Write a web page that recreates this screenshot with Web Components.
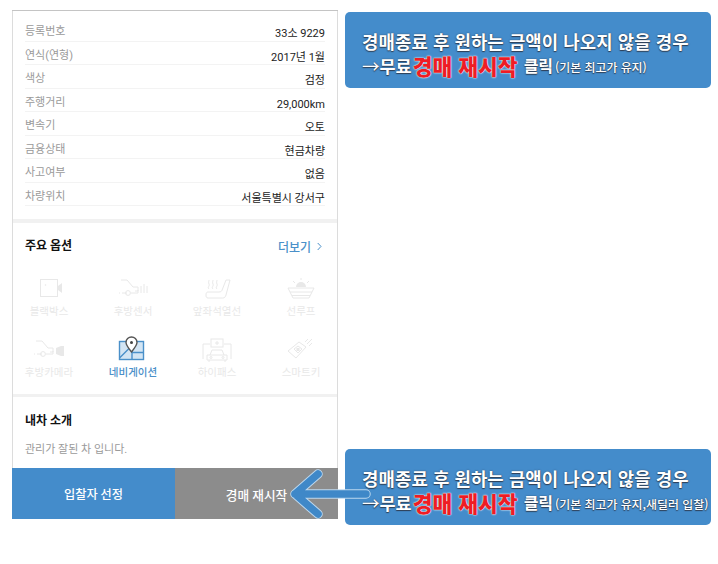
<!DOCTYPE html>
<html lang="ko">
<head>
<meta charset="utf-8">
<title>경매 재시작</title>
<style>
  html, body { margin: 0; background: #fff; }
  body { font-family: Roboto, "Noto Sans CJK KR", sans-serif; }
</style>
</head>
<body>
<auction-page>
  <car-card>
    <spec-list>
      <spec-row label="등록번호" value="33소 9229"></spec-row>
      <spec-row label="연식(연형)" value="2017년 1월"></spec-row>
      <spec-row label="색상" value="검정"></spec-row>
      <spec-row label="주행거리" value="29,000km"></spec-row>
      <spec-row label="변속기" value="오토"></spec-row>
      <spec-row label="금융상태" value="현금차량"></spec-row>
      <spec-row label="사고여부" value="없음"></spec-row>
      <spec-row label="차량위치" value="서울특별시 강서구"></spec-row>
    </spec-list>
    <option-panel>
      <option-item label="블랙박스" icon="camera"></option-item>
      <option-item label="후방센서" icon="sensor"></option-item>
      <option-item label="앞좌석열선" icon="seat"></option-item>
      <option-item label="선루프" icon="sunroof"></option-item>
      <option-item label="후방카메라" icon="rearcam"></option-item>
      <option-item label="네비게이션" icon="navi" active></option-item>
      <option-item label="하이패스" icon="hipass"></option-item>
      <option-item label="스마트키" icon="smartkey"></option-item>
    </option-panel>
    <intro-panel heading="내차 소개">관리가 잘된 차 입니다.</intro-panel>
    <action-bar></action-bar>
  </car-card>
  <note-column>
    <callout-note detail="(기본 최고가 유지)"></callout-note>
    <callout-note detail="(기본 최고가 유지,새딜러 입찰)"></callout-note>
  </note-column>
  <pointer-arrow></pointer-arrow>
</auction-page>

<script>
class AuctionPage extends HTMLElement {
  constructor() {
    super();
    this.attachShadow({ mode: 'open' });
    this.shadowRoot.innerHTML = `
      <style>
        :host {
          display: flex;
          position: relative;
          width: 718px;
          height: 564px;
          box-sizing: border-box;
          padding: 10px 7px 0 12px;
          gap: 7px;
          align-items: flex-start;
          overflow: hidden;
        }
      </style>
      <slot></slot>
    `;
  }
}

class CarCard extends HTMLElement {
  constructor() {
    super();
    this.attachShadow({ mode: 'open' });
    this.shadowRoot.innerHTML = `
      <style>
        :host {
          display: flex;
          flex-direction: column;
          width: 326px;
          height: 509px;
          box-sizing: border-box;
          border-top: 1px solid #c4c4c4;
          box-shadow: inset 1px 0 0 #dcdcdc, inset -1px 0 0 #dcdcdc;
        }
      </style>
      <slot></slot>
    `;
  }
}

class SpecList extends HTMLElement {
  constructor() {
    super();
    this.attachShadow({ mode: 'open' });
    this.shadowRoot.innerHTML = `
      <style>
        :host {
          display: block;
          height: 212px;
          box-sizing: border-box;
          padding: 7px 12px 0 12px;
          border-bottom: 4px solid #f1f1f1;
          margin: 0 1px;
        }
      </style>
      <slot></slot>
    `;
  }
}

class SpecRow extends HTMLElement {
  constructor() {
    super();
    this.attachShadow({ mode: 'open' });
    this.shadowRoot.innerHTML = `
      <style>
        :host {
          display: flex;
          justify-content: space-between;
          height: 23.5px;
          box-sizing: border-box;
          border-bottom: 1px solid #f3f3f3;
          font-size: 11px;
          line-height: 16px;
        }
        .label { color: #9a9a9a; padding-top: 6px; }
        .value { color: #222; padding-top: 8px; height: 15px; }
      </style>
      <span class="label">${this.getAttribute('label')}</span>
      <span class="value">${this.getAttribute('value')}</span>
    `;
  }
}

class OptionPanel extends HTMLElement {
  constructor() {
    super();
    this.attachShadow({ mode: 'open' });
    this.shadowRoot.innerHTML = `
      <style>
        :host {
          display: block;
          height: 174px;
          box-sizing: border-box;
          margin: 0 1px;
          padding: 14px 0 0 0;
          border-bottom: 3px solid #f1f1f1;
        }
        .head {
          display: flex;
          justify-content: space-between;
          align-items: center;
          height: 18px;
          padding: 0 15px 0 12px;
        }
        h2 { margin: 0; font-size: 12px; font-weight: 700; color: #111; line-height: 18px; }
        .more { display: flex; align-items: center; gap: 6px; font-size: 12px; font-weight: 500; color: #4a90c9; }
        .grid {
          display: grid;
          grid-template-columns: repeat(4, 70px);
          grid-auto-rows: 41px;
          column-gap: 14px;
          row-gap: 20px;
          margin-top: 23px;
          padding-left: 1px;
        }
      </style>
      <div class="head">
        <h2>주요 옵션</h2>
        <span class="more">더보기
          <svg width="5" height="9" viewBox="0 0 5 9" fill="none" stroke="#4a90c9" stroke-width="1"><path d="M.7 1l3.3 3.400L.7 8"/></svg>
        </span>
      </div>
      <div class="grid"><slot></slot></div>
    `;
  }
}

const OPTION_ICONS = {
  camera: `<rect x="13.500" y="1.500" width="17" height="17"/><circle cx="18.500" cy="7" r=".8" fill="currentColor" stroke="none"/><path d="M31 8l4-3v10l-4-3z" fill="currentColor" stroke="none"/>`,
  sensor: `<g transform="translate(2 0)"><path d="M8 2h6l6 7h5v4h-3M14 15H9M6 15h1"/><circle cx="15" cy="15" r="2.400"/><path d="M18 15h7v-3M28 8v7M31 6v9M34 8v7"/></g>`,
  seat: `<g transform="translate(-2 0)"><path d="M15 14h11c2 0 3-1 3.500-3L33 2h4l-4 15c-.5 2-1.500 3-3.500 3H15c-1.500 0-2-1-2-3s.5-3 2-3z"/><path d="M16 11c-2-2 1-3 0-5s0-3 0-4M20 11c-2-2 1-3 0-5s0-3 0-4M24 11c-2-2 1-3 0-5s0-3 0-4"/></g>`,
  sunroof: `<path d="M9 10h26l-5 10H14zM11 14h22M13 17.500h18"/><path d="M17 9a5 5 0 0 1 10 0z" fill="currentColor" stroke="none"/><path d="M22 0v2M14 3l2 2M30 3l-2 2"/>`,
  rearcam: `<g transform="translate(3 0)"><path d="M6 2h6l6 7h5v4h-3M12 15H7M4 15h1"/><circle cx="13" cy="15" r="2.400"/><path d="M16 15h7v-3"/><path d="M26 9l5-2h3v10h-3l-5-2z" fill="currentColor" stroke="none"/></g>`,
  navi: `<g transform="translate(-1 -2)"><rect x="9.500" y="4.500" width="24" height="18" fill="#d3e5f4"/><path d="M9.500 21l11-11M22 15.500h11.500M22 4.500v18"/><path d="M21.500 16c-4-5-5.500-7-5.500-9.500a5.500 5.500 0 0 1 11 0c0 2.500-1.500 4.500-5.500 9.500z" transform="translate(0 -1)" fill="#fff" stroke="#555"/><circle cx="21.500" cy="5.500" r="1.500" fill="#444" stroke="none"/></g>`,
  hipass: `<path d="M8 20V5h7M36 20V5h-7"/><rect x="16" y="0" width="12" height="8"/><path d="M22 2v4M20 4h4"/><path d="M15 16l2-5h10l2 5M12 16h20v5H12zM14 21v2M30 21v2"/><circle cx="16" cy="18.500" r="1"/><circle cx="28" cy="18.500" r="1"/>`,
  smartkey: `<g transform="translate(-1 -2)"><path d="M10 14l11-9 7 5-10 11z"/><path d="M16 12l4-3 4 3-4 4z"/><rect x="18.500" y="11" width="3" height="3" fill="currentColor" stroke="none"/><path d="M27 5l3-3M29 7l5-5M31 9l3-3"/></g>`
};

class OptionItem extends HTMLElement {
  constructor() {
    super();
    this.attachShadow({ mode: 'open' });
    const active = this.hasAttribute('active');
    this.shadowRoot.innerHTML = `
      <style>
        :host {
          display: flex;
          flex-direction: column;
          align-items: center;
          font-size: 10.500px;
          line-height: 14px;
          color: ${active ? '#4a90c9' : '#e8e8e8'};
          font-weight: ${active ? 500 : 400};
        }
        svg { display: block; width: 44px; height: 24px; margin-bottom: 3px; overflow: visible; }
      </style>
      <svg viewBox="0 0 44 24" fill="none" stroke="currentColor" stroke-width="${active ? 1.4 : 1}">
        ${OPTION_ICONS[this.getAttribute('icon')]}
      </svg>
      <span>${this.getAttribute('label')}</span>
    `;
  }
}

class IntroPanel extends HTMLElement {
  constructor() {
    super();
    this.attachShadow({ mode: 'open' });
    this.shadowRoot.innerHTML = `
      <style>
        :host {
          display: block;
          height: 71px;
          box-sizing: border-box;
          padding: 15px 13px 0 13px;
        }
        h2 { margin: 0; font-size: 12px; font-weight: 700; color: #111; line-height: 18px; }
        p { margin: 11.500px 0 0; font-size: 11px; color: #9a9a9a; line-height: 16px; }
      </style>
      <h2>${this.getAttribute('heading')}</h2>
      <p><slot></slot></p>
    `;
  }
}

class ActionBar extends HTMLElement {
  constructor() {
    super();
    this.attachShadow({ mode: 'open' });
    this.shadowRoot.innerHTML = `
      <style>
        :host {
          display: grid;
          grid-template-columns: 163px 163px;
          height: 51px;
          font-size: 12.200px;
          font-weight: 500;
          color: #fff;
        }
        div { display: flex; align-items: center; justify-content: center; padding-top: 1px; }
        .select { background: #448ccb; }
        .restart { background: #8c8c8c; font-size: 12.700px; }
      </style>
      <div class="select">입찰자 선정</div>
      <div class="restart">경매 재시작</div>
    `;
  }
}

class NoteColumn extends HTMLElement {
  constructor() {
    super();
    this.attachShadow({ mode: 'open' });
    this.shadowRoot.innerHTML = `
      <style>
        :host {
          display: flex;
          flex-direction: column;
          justify-content: space-between;
          width: 366px;
          height: 513px;
          margin-top: 2px;
        }
      </style>
      <slot></slot>
    `;
  }
}

class CalloutNote extends HTMLElement {
  constructor() {
    super();
    this.attachShadow({ mode: 'open' });
    this.shadowRoot.innerHTML = `
      <style>
        :host {
          display: flex;
          flex-direction: column;
          justify-content: center;
          gap: 3px;
          height: 76px;
          box-sizing: border-box;
          padding: 7px 0 0 17px;
          background: #448ccb;
          border-radius: 5px;
          color: #fff;
          font-family: "Noto Sans CJK KR", sans-serif;
          font-weight: 700;
          white-space: nowrap;
          --edge: #2f3f55;
          text-shadow: 0 0 1.500px var(--edge), 0 1px 1px var(--edge);
        }
        .line { display: flex; align-items: center; height: 21px; line-height: 21px; }
        .one { font-size: 17.800px; font-weight: 700; letter-spacing: .1px; }
        .two { font-size: 17.500px; }
        .arrow { font-weight: 400; }
        .hot {
          font-size: 21.500px;
          line-height: 21px;
          font-weight: 900;
          color: #ee1c25;
          text-shadow: 0 0 2px #fff, 0 0 1px #fff;
          margin: 0 6px 0 1px;
        }
        .click { font-size: 16px; }
        .small { font-size: 11.900px; font-weight: 500; margin-left: 2px; padding-top: 2px; }
      </style>
      <div class="line one">경매종료 후 원하는 금액이 나오지 않을 경우</div>
      <div class="line two"><span class="arrow">→</span>무료<span class="hot">경매 재시작</span><span class="click">클릭</span><span class="small">${this.getAttribute('detail')}</span></div>
    `;
  }
}

// arrow sits over the grey button and the lower callout
class PointerArrow extends HTMLElement {
  constructor() {
    super();
    this.attachShadow({ mode: 'open' });
    this.shadowRoot.innerHTML = `
      <style>
        :host { position: absolute; left: 288px; top: 468px; width: 86px; height: 52px; }
        svg { display: block; }
      </style>
      <svg width="86" height="52" viewBox="0 0 86 52" fill="none" stroke-linecap="round" stroke-linejoin="round">
        <path d="M30 6L7 26l23 20M7 26h71" stroke="#bcd8ef" stroke-width="9.500"/>
        <path d="M30 6L7 26l23 20M7 26h71" stroke="#3f88c8" stroke-width="7.500"/>
      </svg>
    `;
  }
}

customElements.define('auction-page', AuctionPage);
customElements.define('car-card', CarCard);
customElements.define('spec-list', SpecList);
customElements.define('spec-row', SpecRow);
customElements.define('option-panel', OptionPanel);
customElements.define('option-item', OptionItem);
customElements.define('intro-panel', IntroPanel);
customElements.define('action-bar', ActionBar);
customElements.define('note-column', NoteColumn);
customElements.define('callout-note', CalloutNote);
customElements.define('pointer-arrow', PointerArrow);
</script>
</body>
</html>
